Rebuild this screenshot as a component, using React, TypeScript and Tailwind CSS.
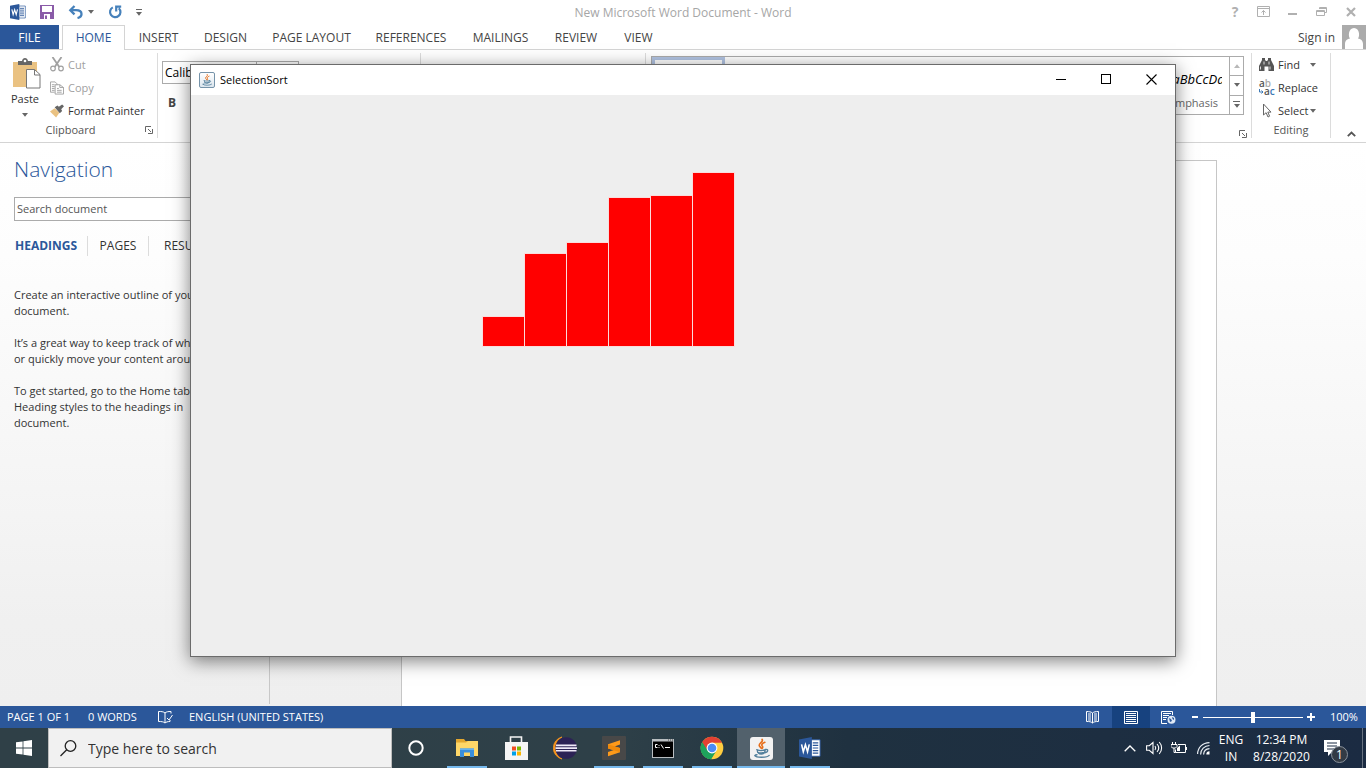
import React from "react";

type IconProps = { className?: string };

const TABS = [
  { name: "INSERT", width: "w-[65px]" },
  { name: "DESIGN", width: "w-[69px]" },
  { name: "PAGE LAYOUT", width: "w-[103px]" },
  { name: "REFERENCES", width: "w-[96px]" },
  { name: "MAILINGS", width: "w-[83px]" },
  { name: "REVIEW", width: "w-[68px]" },
  { name: "VIEW", width: "w-[57px]" },
];

const BARS = [29, 92, 103, 148, 150, 173];

function WordIcon({ className }: IconProps) {
  return (
    <svg viewBox="0 0 24 24" className={className} aria-hidden="true">
      <path d="M13 3h10v18H13z" fill="#fff" stroke="#2b579a" strokeWidth="1" />
      <path d="M15 6.5h6M15 9.2h6M15 12h6M15 14.8h6M15 17.5h6" stroke="#2b579a" strokeWidth="1.3" />
      <path d="M0 2.6 14 0v24L0 21.4z" fill="#2b579a" />
      <path d="m2.8 8 1.9 8 2.3-7.6L9.300 16l1.900-8" fill="none" stroke="#fff" strokeWidth="1.7" />
    </svg>
  );
}

function JavaIcon({ className }: IconProps) {
  return (
    <svg viewBox="0 0 24 24" className={className} aria-hidden="true">
      <path d="M12.600 2.500c2.200 2.600-4.200 4-2.800 6.800.5 1 1.500 1.600 2 2.600M15.500 5.500c-2.500 1-4 2.300-2.700 4 .9 1.100.4 1.900-.4 2.500" fill="none" stroke="#e76f1c" strokeWidth="1.700" strokeLinecap="round" />
      <path d="M7 13.200c2.500 1 7 .9 9 0M7.500 13.500c.2 3 1.200 4.300 4.200 4.300s4-1.300 4.200-4.300M8 16c2.300.7 5.200.7 7.400 0M16 13c3.500-.6 3.200 2.900-.5 3.400M5 19.500c1.500 2.200 13 2.200 15-.3M5 19.500c.5-.9 1.500-1 2.300-1" fill="none" stroke="#53809c" strokeWidth="1.400" strokeLinecap="round" />
    </svg>
  );
}

function Caret({ className = "text-[#666]" }: IconProps) {
  return (
    <svg viewBox="0 0 6 4" className={`h-[4px] w-[6px] ${className}`} aria-hidden="true">
      <path d="M0 0h6L3 3.800z" fill="currentColor" />
    </svg>
  );
}

function Launcher() {
  return (
    <svg viewBox="0 0 8 8" className="size-2" aria-hidden="true">
      <path d="M.5 6V.5H6M3 3l3 3M7.500 3v4.500H3" fill="none" stroke="#666" />
    </svg>
  );
}

function TitleBar() {
  return (
    <header className="grid h-[25px] grid-cols-[1fr_auto_1fr] items-center bg-white">
      <div className="flex items-center pb-[2px] pl-[10px]">
        <WordIcon className="size-4" />
        <button aria-label="Save" className="ml-[14px]">
          <svg viewBox="0 0 14 14" className="size-[14px]" aria-hidden="true">
            <path d="M0 0h14v14H0z" fill="#8a5ba8" />
            <path d="M2 1h10v6H2zM4 9h6v5H4z" fill="#fff" />
            <path d="M5 10.500h2V14H5z" fill="#8a5ba8" />
          </svg>
        </button>
        <button aria-label="Undo" className="ml-[14px]">
          <svg viewBox="0 0 15 14" className="h-[14px] w-[15px]" aria-hidden="true">
            <path d="M2 5.200H8c3.600 0 5.500 1.300 5.500 3.700 0 2.100-1.500 3.500-4 4.100M6.500 1 2.300 5.200l4.200 4.200" fill="none" stroke="#4681bb" strokeWidth="2.300" />
          </svg>
        </button>
        <button aria-label="Undo history" className="ml-[5px]"><Caret /></button>
        <button aria-label="Repeat" className="ml-[14px]">
          <svg viewBox="0 0 14 14" className="size-[14px]" aria-hidden="true">
            <path d="M4.800 2.400A5.200 5.200 0 1 0 10.800 3.200M8.200 6.500V1.600h5" fill="none" stroke="#4681bb" strokeWidth="2.200" />
          </svg>
        </button>
        <button aria-label="Customize toolbar" className="ml-[14px] flex flex-col items-center gap-[2px] pt-[2px]">
          <span className="h-px w-[6px] bg-[#666]" />
          <Caret />
        </button>
      </div>
      <h1 className="text-[12px] leading-4 text-[#a6a6a6]">New Microsoft Word Document - Word</h1>
      <div className="flex items-center justify-end gap-[16px] pr-2 pb-[2px] text-[#b0b0b0]">
        <button aria-label="Help" className="w-[12px] text-[14px] leading-4 font-bold">?</button>
        <button aria-label="Ribbon display options">
          <svg viewBox="0 0 13 11" className="h-[11px] w-[13px]" aria-hidden="true">
            <path d="M.5.5h12v10H.5zM.5 2.500h12M6.500 9V4.500M4.500 6.500l2-2 2 2" fill="none" stroke="currentColor" />
          </svg>
        </button>
        <button aria-label="Minimize Word" className="flex h-3 w-[13px] items-center justify-center">
          <svg viewBox="0 0 10 10" className="size-[10px]" aria-hidden="true"><path d="M0 6h9v2H0z" fill="currentColor" /></svg>
        </button>
        <button aria-label="Restore Word" className="px-[1px]">
          <svg viewBox="0 0 11 11" className="size-[11px]" aria-hidden="true">
            <path d="M3.500 3V1.500h7v5H9M.5 4.500h8v5h-8zM3 2.500h8M.5 5.500h8" fill="none" stroke="currentColor" />
          </svg>
        </button>
        <button aria-label="Close Word" className="px-[2px]">
          <svg viewBox="0 0 10 10" className="size-[10px]" aria-hidden="true"><path d="m1 1 8 8M9 1 1 9" fill="none" stroke="currentColor" strokeWidth="2.200" /></svg>
        </button>
      </div>
    </header>
  );
}

function TabRow() {
  return (
    <nav className="flex h-[25px] border-b border-[#d4d4d4] bg-white text-[12px] leading-4 text-[#444]" aria-label="Ribbon tabs">
      <button className="w-[59px] bg-[#2b579a] pt-px text-white">FILE</button>
      <button className="-mb-px ml-[3px] w-[63px] border border-b-0 border-[#d4d4d4] bg-white text-[#2b579a]">HOME</button>
      <div className="ml-px flex">
        {TABS.map((tab) => (
          <button key={tab.name} className={`${tab.width} pt-[2px] whitespace-nowrap`}>{tab.name}</button>
        ))}
      </div>
      <div className="ml-auto flex items-center gap-[7px]">
        <a href="#signin" className="pt-px">Sign in</a>
        <svg viewBox="0 0 24 24" className="size-6" aria-hidden="true">
          <path d="M0 0h24v24H0z" fill="#ababab" />
          <path d="M3 24v-5c0-3.500 2.500-5.300 5-5.600C6.200 12 6 3 12 3s5.800 9 4 10.400c2.500.3 5 2.100 5 5.600v5z" fill="#fff" />
        </svg>
      </div>
    </nav>
  );
}

function ClipboardGroup() {
  return (
    <section className="flex w-[158px] flex-col border-r border-[#dcdcdc]" aria-label="Clipboard">
      <div className="flex h-[74px]">
        <button className="flex w-[50px] flex-col items-center justify-start pt-[5px] text-[#333]">
          <svg viewBox="0 0 28 31" className="ml-[4px] h-[31px] w-[28px]" aria-hidden="true">
            <path d="M0 4h24v25H0z" fill="#eac282" />
            <path d="M5 3h4c.5-4 5.500-4 6 0h4v4H5z" fill="#666" />
            <circle cx="12" cy="3" r="1.300" fill="#fff" />
            <path d="M13.500 11.500h8l5.500 5V30H13.500z" fill="#fff" stroke="#777" />
            <path d="M21.500 11.500v5.500H27" fill="none" stroke="#777" />
          </svg>
          <span className="mt-[2px]">Paste</span>
          <Caret className="mt-[6px] text-[#666]" />
        </button>
        <div className="flex flex-col text-[#333]">
          <button className="flex h-[23px] items-center gap-1 text-[#a0a0a0]">
            <svg viewBox="0 0 14 15" className="h-[15px] w-[14px]" aria-hidden="true">
              <path d="m2.500 0 6.800 10M11.500 0 4.700 10" fill="none" stroke="currentColor" strokeWidth="1.800" />
              <circle cx="3" cy="11.500" r="2.300" fill="none" stroke="currentColor" strokeWidth="1.200" />
              <circle cx="11" cy="11.500" r="2.300" fill="none" stroke="currentColor" strokeWidth="1.200" />
            </svg>
            Cut
          </button>
          <button className="flex h-[23px] items-center gap-1 text-[#a0a0a0]">
            <svg viewBox="0 0 15 14" className="h-[14px] w-[14px]" aria-hidden="true">
              <path d="M5 11.500H.5v-11h5l2 2V4M2 3.500h3M2 5.500h3M2 7.500h3M2 9.500h3M5.500 3.500h5l4 3v7h-9zM10.500 3.500v3h4M7.500 7.500h2M7.500 9.500h5M7.500 11.500h5" fill="none" stroke="currentColor" />
            </svg>
            Copy
          </button>
          <button className="flex h-[23px] items-center gap-1 whitespace-nowrap">
            <svg viewBox="0 0 15 14" className="h-[14px] w-[14px]" aria-hidden="true">
              <path d="m0 7.500 5-3.500 5 5-3.500 5z" fill="#eac282" />
              <path d="m5 3 3-2 1.500 1.500L13 0l2 2-3 3 1 2-2.500 2.500z" fill="#666" />
            </svg>
            Format Painter
          </button>
        </div>
      </div>
      <div className="flex h-4 items-center justify-between pr-1 text-[#555]">
        <span className="w-[141px] text-center">Clipboard</span>
        <button aria-label="Clipboard options"><Launcher /></button>
      </div>
    </section>
  );
}

function FontGroup() {
  return (
    <section className="w-[263px] border-r border-[#dcdcdc] px-1 pt-2" aria-label="Font">
      <div className="flex text-[12px] text-black">
        <input aria-label="Font name" defaultValue="Calibri (Body)" className="h-[23px] w-[95px] border border-[#ababab] bg-white px-[2px]" />
        <input aria-label="Font size" defaultValue="11" className="-ml-px h-[23px] w-[43px] border border-[#ababab] bg-white px-[2px]" />
      </div>
      <button className="mt-[11px] ml-[6px] text-[12px] font-bold text-[#444]">B</button>
    </section>
  );
}

function StylesGroup() {
  return (
    <section className="flex min-w-0 flex-1 flex-col border-r border-[#dcdcdc] pl-[5px]" aria-label="Styles">
      <div className="mt-[3px] mr-[7px] flex h-[60px] border border-[#ababab] bg-white">
        <button aria-label="Normal style" className="w-[73px] border-[3px] border-[#b1c3e2]" />
        <button className="ml-auto flex w-[72px] flex-col items-end overflow-hidden pt-3 text-[#666]">
          <span className="mr-[7px] flex w-[57px] overflow-hidden text-[13px] leading-5 text-black italic">AaBbCcDd</span>
          <span className="mt-1 mr-[11px] leading-5">Emphasis</span>
        </button>
        <div className="flex w-[14px] flex-col divide-y divide-[#ababab] border-l border-[#ababab]">
          <button aria-label="Scroll styles up" className="flex flex-1 items-center justify-center"><Caret className="rotate-180 text-[#b8b8b8]" /></button>
          <button aria-label="Scroll styles down" className="flex flex-1 items-center justify-center"><Caret /></button>
          <button aria-label="More styles" className="flex flex-1 flex-col items-center justify-center gap-[2px]">
            <span className="h-px w-[7px] bg-[#666]" />
            <Caret />
          </button>
        </div>
      </div>
      <button aria-label="Styles options" className="mt-[15px] mr-1 self-end"><Launcher /></button>
    </section>
  );
}

function EditingGroup() {
  return (
    <section className="flex w-[79px] flex-col border-r border-[#dcdcdc] text-[#333]" aria-label="Editing">
      <div className="flex h-[74px] flex-col pl-[7px]">
        <button className="flex h-[23px] items-center gap-1">
          <svg viewBox="0 0 15 13" className="h-[13px] w-[15px]" aria-hidden="true">
            <path d="M3 0h3v2l1 1h1l1-1V0h3v2l2 4 1 2v5H9.500V8.500h-4V13H0V8l1-2 2-4z" fill="#555" />
            <path d="M1.500 8.500v3M11 8.500v3M5 3.500v3M10 3.500v3" stroke="#fff" strokeWidth=".8" />
          </svg>
          <span className="w-6 text-left">Find</span>
          <Caret className="ml-1 text-[#666]" />
        </button>
        <button className="flex h-[23px] items-center gap-[3px]">
          <svg viewBox="0 0 16 16" className="size-4 overflow-visible" aria-hidden="true">
            <text x="0" y="7" fontSize="10" fontWeight="600" fill="#555">a<tspan fill="#aaa">b</tspan></text>
            <text x="5" y="15" fontSize="10" fontWeight="600" fill="#555">a<tspan fill="#3d79b5">c</tspan></text>
            <path d="M.5 9v3h3M2.500 10.500 4 12l-1.500 1.500" fill="none" stroke="#3d79b5" />
          </svg>
          Replace
        </button>
        <button className="flex h-[23px] items-center gap-1">
          <svg viewBox="0 0 15 15" className="size-[15px]" aria-hidden="true">
            <path d="M4.500 1v11l2.600-2.300L9 14l1.600-.8-1.800-4.100H12z" fill="#fff" stroke="#666" />
          </svg>
          <span className="flex items-center gap-[2px]">Select <Caret /></span>
        </button>
      </div>
      <span className="text-center text-[#555]">Editing</span>
    </section>
  );
}

function Ribbon() {
  return (
    <div className="flex h-[93px] border-b border-[#d4d4d4] bg-white pt-[3px] pb-1 text-[11px] leading-4">
      <ClipboardGroup />
      <FontGroup />
      <section className="w-[225px] border-r border-[#dcdcdc]" aria-label="Paragraph" />
      <StylesGroup />
      <EditingGroup />
      <button aria-label="Collapse the ribbon" className="flex w-[35px] items-end justify-center pb-[1px] pl-[6px]">
        <svg viewBox="0 0 9 6" className="h-[6px] w-[9px]" aria-hidden="true"><path d="m.8 5.200 3.700-3.700 3.700 3.700" fill="none" stroke="#555" strokeWidth="1.800" /></svg>
      </button>
    </div>
  );
}

function NavigationPane() {
  return (
    <aside className="mb-[2px] w-[270px] border-r border-[#c8c8c8] pl-[14px] text-[11px] leading-4 text-[#333]">
      <h2 className="mt-[10px] text-[21px] leading-[32px] font-light text-[#2b579a]">Navigation</h2>
      <input aria-label="Search document" placeholder="Search document" className="mt-3 h-6 w-[242px] border border-[#ababab] bg-white px-[2px] pb-px placeholder:text-[#555]" />
      <div className="mt-[15px] flex h-5 items-center divide-x divide-[#dcdcdc] text-[12px]">
        <button className="h-5 w-[74px] pl-px text-left font-bold text-[#2b579a]">HEADINGS</button>
        <button className="h-5 w-[61px]">PAGES</button>
        <button className="h-5 pl-[15px]">RESULTS</button>
      </div>
      <p className="mt-[31px]">Create an interactive outline of your<br />document.</p>
      <p className="mt-4 whitespace-nowrap">It’s a great way to keep track of where<br />or quickly move your content around.</p>
      <p className="mt-4 whitespace-nowrap">To get started, go to the Home tab<br />Heading styles to the headings in<br />document.</p>
    </aside>
  );
}

function StatusBar() {
  return (
    <footer className="flex h-[22px] items-center bg-[#2b579a] text-[11px] leading-4 text-white">
      <span className="w-[81px] pl-[7px]">PAGE 1 OF 1</span>
      <span className="w-[70px] pl-[7px]">0 WORDS</span>
      <button aria-label="Proofing" className="w-[38px] pl-[7px]">
        <svg viewBox="0 0 15 13" className="h-[13px] w-[15px]" aria-hidden="true">
          <path d="M7 2v10M7 2C5.500.5 3 .5.500.5v10c3 0 5 .2 6.500 1.500 1.200-1 2.500-1.400 5-1.500V9M7 2C8.500.7 10 .5 13 .5v2M9 7l2 2 3.500-5" fill="none" stroke="#fff" />
        </svg>
      </button>
      <span>ENGLISH (UNITED STATES)</span>
      <div className="ml-auto flex h-full items-center">
        <button aria-label="Read mode" className="flex w-[39px] justify-center">
          <svg viewBox="0 0 13 13" className="size-[13px]" aria-hidden="true">
            <path d="M6.500 2v10M6.500 2C5 .7 3 .7.500.5v10c3 0 4.500.2 6 1.500 1.500-1.300 3-1.500 6-1.500V.5c-3 .2-4.500.2-6 1.500M2 3h3M2 5h3M2 7h3M2 9h3M8 3h3M8 5h3M8 7h3M8 9h3" fill="none" stroke="#fff" />
          </svg>
        </button>
        <button aria-label="Print layout" className="flex h-full w-[38px] items-center justify-center bg-[#17427f]">
          <svg viewBox="0 0 14 13" className="h-[13px] w-[14px]" aria-hidden="true">
            <path d="M.5.5h13v12H.5zM2 2.500h10M2 4.500h10M2 6.500h10M2 8.500h10M2 10.500h10" fill="none" stroke="#fff" />
          </svg>
        </button>
        <button aria-label="Web layout" className="flex w-[37px] justify-center">
          <svg viewBox="0 0 15 13" className="h-[13px] w-[15px]" aria-hidden="true">
            <path d="M6 12.500H.5V.5h11V4M2 2.500h8M2 4.500h6M2 6.500h4M2 8.500h3" fill="none" stroke="#fff" />
            <circle cx="10.500" cy="8.700" r="4" fill="#dfe8f5" />
            <path d="m8 7 2 1 1 2-2 1zM11 6l2 1v2l-1.500-1z" fill="#2b579a" />
          </svg>
        </button>
        <button aria-label="Zoom out" className="flex w-4 justify-center"><span className="h-[2px] w-[6px] bg-white" /></button>
        <input aria-label="Zoom" type="range" min="10" max="190" defaultValue="100" className="h-3 w-[100px] appearance-none bg-[linear-gradient(#fff,#fff)] bg-[length:100%_1px] bg-center bg-no-repeat [&::-webkit-slider-thumb]:h-[11px] [&::-webkit-slider-thumb]:w-1 [&::-webkit-slider-thumb]:appearance-none [&::-webkit-slider-thumb]:bg-white" />
        <button aria-label="Zoom in" className="flex w-4 justify-center">
          <svg viewBox="0 0 8 8" className="size-2" aria-hidden="true"><path d="M4 0v8M0 4h8" stroke="#fff" strokeWidth="2" /></svg>
        </button>
        <span className="w-[47px] pl-[11px]">100%</span>
      </div>
    </footer>
  );
}

function TaskButton({ label, running, active, children }: { label: string; running?: boolean; active?: boolean; children: React.ReactNode }) {
  return (
    <button aria-label={label} className={`flex h-10 w-12 flex-col items-center ${active ? "bg-[#52616c]" : ""}`}>
      <span className="flex h-[38px] items-center justify-center pt-[2px]">{children}</span>
      {running && <span className={`h-[2px] bg-[#76b9ed] ${active ? "w-12" : "w-10"}`} />}
    </button>
  );
}

function Taskbar() {
  return (
    <div className="flex h-10 bg-[linear-gradient(90deg,#2f4047_0%,#2e4048_45%,#1f3140_62%,#1b2b42_100%)] text-white">
      <button aria-label="Start" className="flex w-12 items-center justify-center">
        <svg viewBox="0 0 16 16" className="size-4" aria-hidden="true">
          <path d="M0 2.300 6.600 1.400v6.200H0zM7.400 1.300 16 0v7.600H7.400zM0 8.400h6.600v6.200L0 13.700zM7.400 8.400H16V16l-8.600-1.300z" fill="#fff" />
        </svg>
      </button>
      <label className="flex w-[344px] items-center border border-[#bdbdbd] bg-[#f1f1f1] pl-[11px]">
        <svg viewBox="0 0 17 17" className="size-[17px]" aria-hidden="true">
          <circle cx="10.500" cy="6" r="5.300" fill="none" stroke="#222" strokeWidth="1.300" />
          <path d="M6.700 9.800.5 16" stroke="#222" strokeWidth="1.300" />
        </svg>
        <input aria-label="Type here to search" placeholder="Type here to search" className="ml-[11px] min-w-0 flex-1 bg-transparent pt-px text-[14px] leading-5 text-[#333] outline-none placeholder:text-[#333]" />
      </label>
      <TaskButton label="Cortana">
        <svg viewBox="0 0 16 16" className="size-4" aria-hidden="true"><circle cx="8" cy="8" r="6.700" fill="none" stroke="#fff" strokeWidth="2" /></svg>
      </TaskButton>
      <div className="ml-[3px] flex gap-px">
        <TaskButton label="File Explorer" running>
          <svg viewBox="0 0 22 18" className="h-[18px] w-[22px]" aria-hidden="true">
            <path d="M0 0h8l1.500 2H22v15H0z" fill="#e3a72f" />
            <path d="M0 3.500h10L12 2h10v15H0z" fill="#ffd768" />
            <path d="M4 9.500h14V18h-4v-4.500H8V18H4z" fill="#3a8fdc" />
            <path d="M4 9.500h14V11H4z" fill="#67b3ee" />
          </svg>
        </TaskButton>
        <TaskButton label="Microsoft Store">
          <svg viewBox="0 0 23 24" className="h-6 w-[23px]" aria-hidden="true">
            <path d="M5.500 8V1h11v7" fill="none" stroke="#f3f3f3" strokeWidth="1.600" />
            <path d="M0 6h23v18H0z" fill="#f5f5f5" />
            <path d="M7 10.500h4v4H7z" fill="#f04e23" /><path d="M12 10.500h4v4h-4z" fill="#7bb802" />
            <path d="M7 15.500h4v4H7z" fill="#00a1e8" /><path d="M12 15.500h4v4h-4z" fill="#fbb500" />
          </svg>
        </TaskButton>
        <TaskButton label="Eclipse">
          <svg viewBox="0 0 24 24" className="size-6" aria-hidden="true">
            <path d="M9 1A11.300 11.300 0 0 0 9 23 12.500 12.500 0 0 1 9 1z" fill="#f7941e" stroke="#f7941e" strokeWidth=".8" />
            <circle cx="13.200" cy="12" r="10.800" fill="#2c2255" />
            <path d="M3 8.500h20.500v1.800H3zM2.500 11.200h21.500v1.800H2.500zM3 14h20.500v1.600H3z" fill="#efeaf8" />
          </svg>
        </TaskButton>
        <TaskButton label="Sublime Text" running>
          <svg viewBox="0 0 24 24" className="size-6" aria-hidden="true">
            <rect width="24" height="24" rx="1" fill="#484848" />
            <path d="m6 8.200 12-4v4.300l-5.500 2L18 12v4.300l-12 4V16l5.800-2L6 12.400z" fill="#ff9a1a" />
            <path d="m6 8.200 12 3.800v4.300L6 12.400z" fill="#f08a0c" />
          </svg>
        </TaskButton>
        <TaskButton label="Command Prompt" running>
          <svg viewBox="0 0 22 19" className="h-[19px] w-[22px]" aria-hidden="true">
            <path d="M0 0h22v19H0z" fill="#b9bec1" /><path d="M1 2.500h20V18H1z" fill="#000" />
            <path d="M5.500 5.500H3.500v3h2M7 6v.8M7 8v.8M9 5.500l2.500 4M13 8.500h5" fill="none" stroke="#fff" />
            <path d="M16 1h1M18 1h1M20 1h1" stroke="#444" />
          </svg>
        </TaskButton>
        <TaskButton label="Google Chrome" running>
          <svg viewBox="0 0 24 24" className="size-6" aria-hidden="true">
            <circle cx="12" cy="12" r="11.300" fill="#ffcd40" />
            <path d="M12 12 2.200 6.300A11.300 11.300 0 0 1 22 6.800H12z" fill="#e34133" />
            <path d="M12 12 2.200 6.300A11.300 11.300 0 0 0 11 23.300l5.500-8.800z" fill="#1ea35c" />
            <path d="m2.200 6.300 5.300 8.200 4-7.700L10 2z" fill="#e34133" />
            <path d="m2.200 6.300 5.200 8.800L12 17.500 16.500 14l-5.500 9.300A11.300 11.300 0 0 1 2.200 6.300z" fill="#1ea35c" />
            <circle cx="12" cy="12" r="5.400" fill="#fff" /><circle cx="12" cy="12" r="4.300" fill="#4c8bf5" />
          </svg>
        </TaskButton>
        <TaskButton label="SelectionSort" running active>
          <span className="rounded-[3px] bg-[#f2f2f2]"><JavaIcon className="size-[23px]" /></span>
        </TaskButton>
        <TaskButton label="Word" running>
          <WordIcon className="size-[22px]" />
        </TaskButton>
      </div>
      <div className="ml-auto flex items-center text-center text-[12px] leading-[17px]">
        <button aria-label="Show hidden icons" className="flex w-6 justify-center">
          <svg viewBox="0 0 12 7" className="h-[7px] w-3" aria-hidden="true"><path d="m.7 6.300 5.300-5.300 5.300 5.300" fill="none" stroke="#fff" strokeWidth="1.300" /></svg>
        </button>
        <button aria-label="Volume" className="flex w-[25px] justify-center">
          <svg viewBox="0 0 17 14" className="h-[14px] w-[17px]" aria-hidden="true">
            <path d="M.6 4.700h2.700L7 1.500v11L3.300 9.300H.6zM9 5c1 1.300 1 2.700 0 4M11 3c2.200 2.500 2.200 5.500 0 8M13.200 1c3.200 3.500 3.200 8.500 0 12" fill="none" stroke="#fff" strokeWidth="1.100" />
          </svg>
        </button>
        <button aria-label="Battery" className="flex w-6 justify-center">
          <svg viewBox="0 0 16 12" className="h-3 w-4" aria-hidden="true">
            <path d="M1.500 0v2.500M4.500 0v2.500M0 2.500h6v2L4.500 6h-3L0 4.500zM3 6v4.500h1.500" fill="none" stroke="#fff" />
            <path d="M7 2.500h7.500v8h-10V7.500M15.500 5v3" fill="none" stroke="#fff" /><path d="M6 6l3-2.500V9H6z" fill="#fff" />
          </svg>
        </button>
        <button aria-label="Network" className="flex w-6 justify-center">
          <svg viewBox="0 0 13 13" className="size-[13px]" aria-hidden="true">
            <path d="M.6 12C.8 5.500 5.500.8 12.500.6M3.600 12.500c.1-5 3.900-8.800 8.900-9M6.600 12.500c.2-3.500 2.600-5.700 5.900-5.900" fill="none" stroke="#e8edf2" strokeWidth="1.200" />
            <path d="M9.300 12.500A3.200 3.200 0 0 1 12.500 9.300v3.200z" fill="#fff" />
          </svg>
        </button>
        <button className="w-8">ENG<br />IN</button>
        <time dateTime="2020-08-28T12:34" className="w-[69px] whitespace-nowrap">12:34 PM<br />8/28/2020</time>
        <button aria-label="1 notification" className="relative flex h-10 w-[46px] pt-3 pl-[8px]">
          <svg viewBox="0 0 16 16" className="size-4" aria-hidden="true">
            <path d="M0 0h16v12H8l-4 4v-4H0z" fill="#fff" /><path d="M3 3h10M3 6h10M3 9h7" stroke="#1b2b42" />
          </svg>
          <span className="absolute top-[18px] left-[15px] flex size-[17px] items-center justify-center rounded-full border border-[#8a929c] bg-[#333b45] text-[12px]">1</span>
        </button>
        <span className="h-10 w-[4px] border-l border-[#67717f]" />
      </div>
    </div>
  );
}

function SortWindow() {
  return (
    <section aria-label="SelectionSort" className="absolute top-16 right-[190px] bottom-[111px] left-[190px] flex flex-col border border-[#6b6b6b] bg-[#eee] shadow-[0_4px_17px_rgba(0,0,0,0.5)]">
      <header className="flex h-[30px] items-center bg-white pb-px pl-2">
        <span className="rounded-[2px] border border-[#7593a9] bg-[linear-gradient(#fff,#dce6ee)]"><JavaIcon className="size-[14px]" /></span>
        <h2 className="ml-[5px] text-[11px] leading-4 text-black">SelectionSort</h2>
        <div className="ml-auto flex h-full">
          <button aria-label="Minimize" className="flex w-[45px] items-center justify-center">
            <span className="h-px w-[10px] bg-black" />
          </button>
          <button aria-label="Maximize" className="flex w-[45px] items-center justify-center pb-px">
            <span className="size-[10px] border border-black" />
          </button>
          <button aria-label="Close" className="flex w-[47px] items-center justify-center pb-px">
            <svg viewBox="0 0 11 11" className="size-[11px]" aria-hidden="true"><path d="m.5.500 10 10M10.500.5l-10 10" stroke="#000" strokeWidth="1.100" /></svg>
          </button>
        </div>
      </header>
      <div className="flex items-end gap-px pt-[78px] pl-[292px]" role="img" aria-label="Sorted bars">
        {BARS.map((height) => (
          <span key={height} className="w-[41px] bg-[#f00] shadow-[0_0_0_1px_#fadcdc]" style={{ height }} />
        ))}
      </div>
    </section>
  );
}

export default function App() {
  return (
    <div className="relative flex min-h-screen flex-col overflow-hidden bg-white font-['Open_Sans','Noto_Sans',sans-serif]">
      <TitleBar />
      <TabRow />
      <Ribbon />
      <main className="flex flex-1 bg-[linear-gradient(#fff_0%,#fdfdfd_20%,#f7f7f7_52%,#f0f0f0_85%,#efefef_100%)]">
        <NavigationPane />
        <div className="flex flex-1 justify-center pt-[17px] pr-[18px]">
          <article aria-label="Document page" className="w-[816px] border border-b-0 border-[#c6c6c6] bg-white" />
        </div>
      </main>
      <StatusBar />
      <Taskbar />
      <SortWindow />
    </div>
  );
}
